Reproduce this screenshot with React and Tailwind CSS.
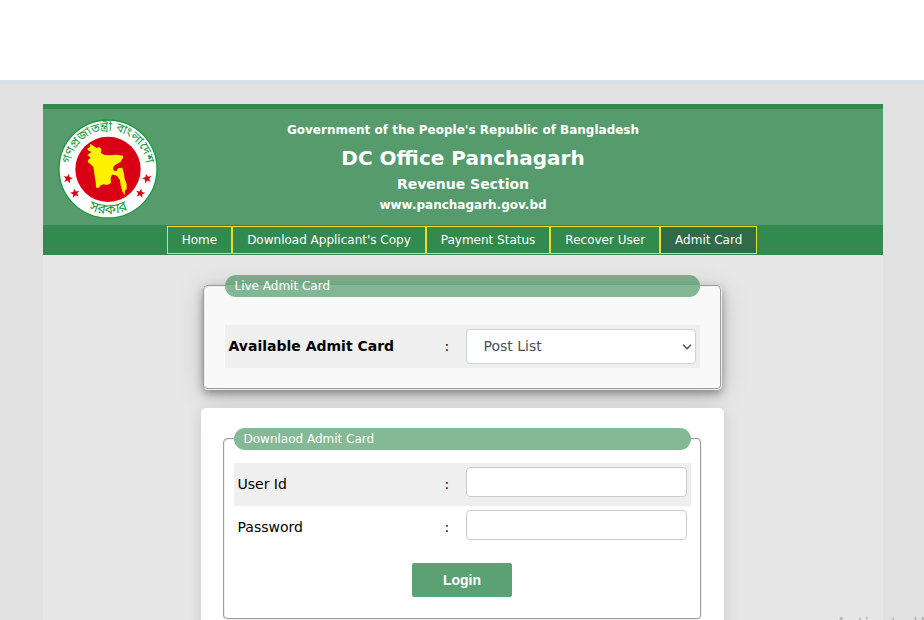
import { ChevronDown } from "lucide-react";

// Navigation links
const navigation = [
  { name: "Home", href: "#home" },
  { name: "Download Applicant's Copy", href: "#applicant-copy" },
  { name: "Payment Status", href: "#payment-status" },
  { name: "Recover User", href: "#recover-user" },
  { name: "Admit Card", href: "#admit-card", current: true },
];

// Helper function to join classes
function classNames(...classes) {
  return classes.filter(Boolean).join(" ");
}

const STAR =
  "M0 -14 L4 -5 L14 -5 L6 2 L9 12 L0 6 L-9 12 L-6 2 L-14 -5 L-4 -5 Z";

function GovtSeal() {
  return (
    <svg
      viewBox="24 26 300 300"
      className="size-[100px] shrink-0"
      role="img"
      aria-label="Government seal of Bangladesh"
    >
      <defs>
        <path id="seal-top" d="M62 200 A115 115 0 1 1 287 200" />
        <path id="seal-bottom" d="M57 240 A133 133 0 0 0 292 240" />
      </defs>
      <circle cx="174" cy="176" r="147" fill="#fff" stroke="#1b9a43" strokeWidth="4" />
      <circle cx="174" cy="177" r="98" fill="#d90016" />
      <path
        fill="#fff200"
        d="M113 114 L120 110 L121 100 L130 106 L140 113 L148 110 L154 116 L153 128 L162 133 L180 135 L200 133 L219 136 L219 142 L212 154 L195 165 L190 170 L190 180 L199 183 L204 174 L210 173 L217 172 L220 182 L222 190 L224 205 L230 222 L230 237 L225 240 L224 255 L217 243 L212 225 L210 210 L202 198 L197 195 L186 193 L182 203 L183 218 L172 224 L160 222 L150 226 L148 232 L138 232 L137 215 L133 190 L130 170 L120 160 L113 155 L115 148 L122 142 L112 135 L124 125 L113 120 Z"
      />
      <g fill="#d90016">
        <path d={STAR} transform="translate(54 205) rotate(12)" />
        <path d={STAR} transform="translate(75 249) rotate(-12)" />
        <path d={STAR} transform="translate(291 205) rotate(-12)" />
        <path d={STAR} transform="translate(271 249) rotate(12)" />
      </g>
      <g fill="#1b9a43" fontFamily="'Noto Sans Bengali', 'Noto Sans', sans-serif">
        <text fontSize="37" textAnchor="middle">
          <textPath href="#seal-top" startOffset="50%">
            গণপ্রজাতন্ত্রী বাংলাদেশ
          </textPath>
        </text>
        <text fontSize="42" textAnchor="middle">
          <textPath href="#seal-bottom" startOffset="50%">
            সরকার
          </textPath>
        </text>
      </g>
    </svg>
  );
}

function Header() {
  return (
    <header className="border-t-[5px] border-[#338a4f] bg-[#569b6c] text-white">
      <div className="grid h-[116px] grid-cols-[100px_1fr_100px] px-[15px] pt-[10px]">
        <GovtSeal />
        <div className="text-center font-bold">
          <p className="text-[12px] leading-[22px]">
            Government of the People's Republic of Bangladesh
          </p>
          <h1 className="text-[20px] leading-[34px]">DC Office Panchagarh</h1>
          <p className="text-[14px] leading-[18px]">Revenue Section</p>
          <p className="text-[12px] leading-[24px]">www.panchagarh.gov.bd</p>
        </div>
      </div>
      <nav className="flex h-[30px] items-center justify-center bg-[#338a4f] pr-[2px]">
        {navigation.map((item) => (
          <a
            key={item.name}
            href={item.href}
            aria-current={item.current ? "page" : undefined}
            className={classNames(
              item.current && "bg-[#2f6a49]",
              "h-[28px] border border-[#f0dc28] px-[14px] text-[12px] leading-[26px]"
            )}
          >
            {item.name}
          </a>
        ))}
      </nav>
    </header>
  );
}

function Legend({ children }) {
  return (
    <legend className="w-full rounded-full bg-[#338a4f]/60 px-[10px] text-[12px] leading-[22px] text-white">
      {children}
    </legend>
  );
}

function LiveAdmitCard() {
  return (
    <fieldset className="mx-auto w-full max-w-[519px] rounded-[5px] border-2 border-[#f0f0f0] bg-[#f9f9f9] px-[20px] pb-[20px] [border-style:groove] shadow-[0_4px_8px_0_rgba(0,0,0,0.35),0_4px_28px_0_rgba(0,0,0,0.16)]">
      <Legend>Live Admit Card</Legend>
      <table className="mt-[28px] w-full table-fixed">
        <tbody>
          <tr className="h-[43px] bg-[#efefef]">
            <td className="w-[216px] p-[4px] text-[14px] font-bold">
              <label htmlFor="post">Available Admit Card</label>
            </td>
            <td className="w-[21px] pl-[4px] text-[14px]">:</td>
            <td className="p-[4px]">
              <div className="relative">
                <select
                  id="post"
                  className="block h-[35px] w-full appearance-none rounded-[4px] border border-[#ced4da] bg-white px-[17px] text-[14px] text-[#495057]"
                >
                  <option>Post List</option>
                </select>
                <ChevronDown
                  aria-hidden="true"
                  strokeWidth={3}
                  className="pointer-events-none absolute top-[11px] right-[2px] size-[14px] text-[#5c5c5c]"
                />
              </div>
            </td>
          </tr>
        </tbody>
      </table>
    </fieldset>
  );
}

function LoginRow({ id, label, type, striped }) {
  return (
    <tr className={classNames(striped && "bg-[#efefef]", "h-[43px]")}>
      <td className="w-[207px] p-[4px] text-[14px]">
        <label htmlFor={id}>{label}</label>
      </td>
      <td className="w-[21px] pl-[4px] text-[14px]">:</td>
      <td className="p-[4px] align-top">
        <input
          id={id}
          type={type}
          className="block h-[30px] w-full rounded-[4px] border border-[#cccccc] bg-white px-2 text-[14px]"
        />
      </td>
    </tr>
  );
}

function DownloadAdmitCard() {
  return (
    <form className="mx-auto mt-[18px] w-full max-w-[523px] rounded-[5px] bg-white px-[22px] pt-[20px] pb-[24px] shadow-[0_4px_16px_0_rgba(0,0,0,0.14)]">
      <fieldset className="rounded-[5px] border-2 border-[#f0f0f0] px-[9px] pb-[21px] [border-style:groove]">
        <Legend>Downlaod Admit Card</Legend>
        <table className="mt-[13px] w-full table-fixed">
          <tbody>
            <LoginRow id="user-id" label="User Id" type="text" striped />
            <LoginRow id="password" label="Password" type="password" />
          </tbody>
        </table>
        <button
          type="button"
          className="mx-auto mt-[14px] block h-[34px] w-[100px] rounded-[2px] bg-[#5ca173] font-['Liberation_Sans',Arial,sans-serif] text-[14px] font-bold text-white"
        >
          Login
        </button>
      </fieldset>
    </form>
  );
}

export default function App() {
  return (
    <div className="h-screen overflow-hidden bg-white pt-[80px] font-['DejaVu_Sans',Verdana,sans-serif] text-black">
      <div className="min-h-full border-t-4 border-[#d8e1e8] bg-[#e1e1e1] pt-[20px] pl-[2px]">
        <div className="mx-auto w-full max-w-[840px] bg-[#e7e7e7]">
          <Header />
          <main className="overflow-hidden pt-[20px] pr-[2px] pb-[40px]">
            <LiveAdmitCard />
            <DownloadAdmitCard />
          </main>
        </div>
      </div>
      <p className="fixed top-[610px] left-[835px] whitespace-nowrap font-['Open_Sans',sans-serif] text-[20px] leading-[28px] text-[#b4b4b4]">
        Activate Windows
      </p>
    </div>
  );
}
